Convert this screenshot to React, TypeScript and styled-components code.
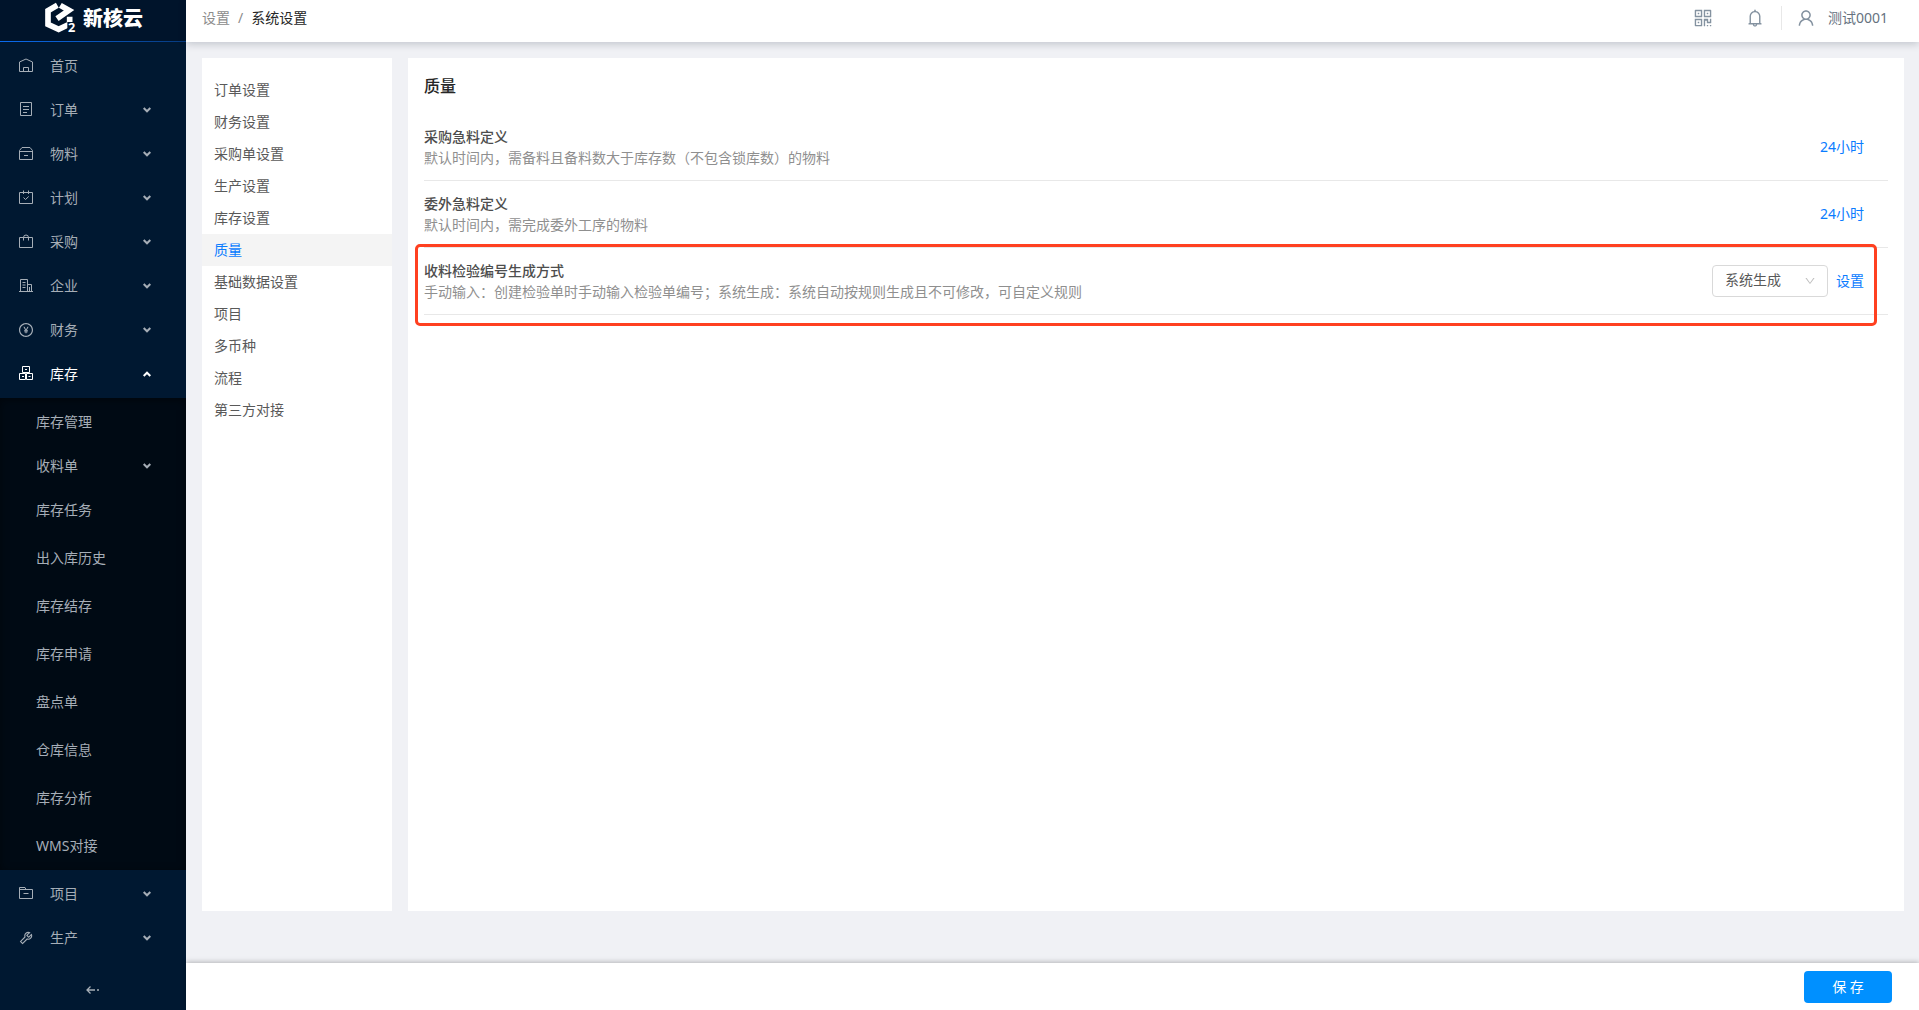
import React from "react";
import styled, { createGlobalStyle } from "styled-components";
import {
  AiOutlineBell,
  AiOutlineDown,
  AiOutlinePayCircle,
  AiOutlineQrcode,
  AiOutlineTool,
  AiOutlineUser,
} from "react-icons/ai";

const GlobalStyle = createGlobalStyle`
  *, *::before, *::after { box-sizing: border-box; }
  body {
    margin: 0;
    font-family: "Noto Sans", "Noto Sans CJK SC", sans-serif;
    font-size: 14px;
    line-height: 20px;
    color: #595959;
  }
  button, select { font: inherit; color: inherit; }
  a { color: inherit; text-decoration: none; }
  h1, h2, p, ul, ol { margin: 0; padding: 0; }
  ul, ol { list-style: none; }
`;

const Page = styled.div`
  display: flex;
  height: 100vh;
  background: #f0f1f5;
`;

/* ---------- sidebar ---------- */

const Sidebar = styled.aside`
  display: flex;
  flex-direction: column;
  flex: none;
  width: 186px;
  background: #001831;
  color: #a6aeb7;
`;

const Brand = styled.a`
  display: flex;
  align-items: center;
  gap: 6px;
  height: 42px;
  padding: 0 0 3px 45px;
  background: #00142b;
  border-bottom: 1px solid;
  border-image: linear-gradient(90deg, #0a6cf0, #063a7e) 1;
  color: #fff;
`;

const BrandName = styled.span`
  font-size: 20px;
  font-weight: 900;
  line-height: 24px;
`;

const Menu = styled.ul`
  display: flex;
  flex-direction: column;
  flex: 1;
  gap: 4px;
  min-height: 0;
  padding-top: 4px;
`;

const MenuButton = styled.button<{ $active?: boolean }>`
  display: flex;
  align-items: center;
  width: 100%;
  height: 40px;
  padding: 0 35px 0 18px;
  border: 0;
  background: none;
  color: ${(p) => (p.$active ? "#fff" : "inherit")};
  text-align: left;
  cursor: pointer;

  > span { flex: 1; margin-left: 16px; }
`;

const SubMenu = styled.ul`
  display: flex;
  flex-direction: column;
  gap: 4px;
  padding: 4px 0;
  background: #000a14;
  box-shadow: inset 0 2px 8px rgba(0, 0, 0, 0.45);
`;

const Leaf = styled.li`
  & + & { margin-top: 4px; }
`;

const LeafLink = styled.a`
  display: flex;
  align-items: center;
  height: 40px;
  padding-left: 36px;
`;

const SubButton = styled(MenuButton)`
  padding-left: 36px;
  > span { margin-left: 0; }
`;

const Collapse = styled.button`
  display: flex;
  align-items: center;
  justify-content: center;
  height: 40px;
  border: 0;
  padding: 0;
  background: none;
  cursor: pointer;
`;

/* ---------- content ---------- */

const Content = styled.div`
  display: flex;
  flex-direction: column;
  flex: 1;
  min-width: 0;
`;

const Header = styled.header`
  display: flex;
  align-items: center;
  justify-content: space-between;
  height: 42px;
  padding: 0 31px 6px 16px;
  background: #fff;
  box-shadow: 0 2px 8px rgba(0, 21, 41, 0.2);
`;

const Crumbs = styled.ol`
  display: flex;
  gap: 8px;
  color: #8c8c8c;
  li[aria-current] { color: #262626; }
`;

const Tools = styled.div`
  display: flex;
  align-items: center;
  color: #8492a0;
`;

const IconButton = styled.button`
  display: flex;
  margin-right: 31px;
  padding: 0;
  border: 0;
  background: none;
  cursor: pointer;
  & + & { margin-right: 16px; }
`;

const UserButton = styled.button`
  display: flex;
  align-items: center;
  gap: 12px;
  height: 24px;
  padding: 0 0 0 14px;
  border: 0;
  border-left: 1px solid #e8e8e8;
  background: none;
  cursor: pointer;
  span { color: #66727f; }
`;

const Body = styled.main`
  display: flex;
  flex: 1;
  gap: 16px;
  min-height: 0;
  padding: 16px 15px 52px 16px;
`;

const SideNav = styled.nav`
  flex: none;
  width: 190px;
  padding: 16px 0;
  background: #fff;
`;

const SideLink = styled.a<{ $active?: boolean }>`
  display: flex;
  align-items: center;
  height: 32px;
  padding: 0 12px;
  background: ${(p) => (p.$active ? "#f4f4f4" : "transparent")};
  color: ${(p) => (p.$active ? "#0a7cff" : "inherit")};
`;

const Panel = styled.section`
  flex: 1;
  min-width: 0;
  padding: 16px;
  background: #fff;
`;

const PanelTitle = styled.h1`
  margin-bottom: 16px;
  color: #262626;
  font-size: 16px;
  font-weight: 500;
  line-height: 24px;
`;

const Row = styled.div`
  position: relative;
  display: flex;
  align-items: center;
  justify-content: space-between;
  padding: 12px 24px 12px 0;
  border-bottom: 1px solid #e8e8e8;
`;

const RowTitle = styled.h2`
  color: #4d4d4d;
  font-size: 14px;
  font-weight: 500;
  line-height: 21px;
`;

const RowText = styled.p`
  color: #8f8f8f;
  line-height: 21px;
`;

const Actions = styled.div`
  display: flex;
  align-items: center;
  gap: 8px;
  margin: -8px 0;
`;

const LinkButton = styled.button`
  padding: 0;
  border: 0;
  background: none;
  color: #0a7cff;
  cursor: pointer;
`;

const Highlight = styled.div`
  position: absolute;
  inset: -4px 11px -12px -9px;
  border: 3px solid #ff4020;
  border-radius: 5px;
  pointer-events: none;
`;

const SelectBox = styled.div`
  display: grid;
  align-items: center;
  width: 116px;

  > * { grid-area: 1 / 1; }
  > svg {
    justify-self: end;
    margin-right: 12px;
    color: #bfbfbf;
    pointer-events: none;
  }
`;

const Select = styled.select`
  width: 100%;
  height: 32px;
  padding: 0 12px 2px;
  border: 1px solid #d9d9d9;
  border-radius: 4px;
  background: #fff;
  appearance: none;
`;

const Footer = styled.footer`
  display: flex;
  justify-content: flex-end;
  padding: 8px 27px 7px;
  background: #fff;
  box-shadow: 0 -1px 5px rgba(0, 0, 0, 0.25);
`;

const SaveButton = styled.button`
  width: 88px;
  height: 32px;
  border: 0;
  border-radius: 4px;
  background: #0090ff;
  color: #fff;
  cursor: pointer;
`;

/* ---------- drawings ---------- */

const Logo = () => (
  <svg width="32" height="36" viewBox="0 -9 96 108" fill="none" aria-hidden="true">
    <g stroke="#fff" strokeWidth="17">
      <path d="M37 4L9 20V61L41 76L74 60V38" />
      <path d="M46 4L72 19L36 44" />
    </g>
    <path d="M67 99V54H96V99Z" fill="#00142b" />
    <text x="69" y="83" fontSize="38" fontWeight="700" fill="#fff">
      2
    </text>
  </svg>
);

const Chevron = ({ up }: { up?: boolean }) => (
  <svg width="8" height="6" viewBox="0 0 8 6" fill="none" stroke="currentColor" strokeWidth="2" aria-hidden="true">
    <path d={up ? "M0.7 5L4 1.7L7.3 5" : "M0.7 1L4 4.3L7.3 1"} />
  </svg>
);

const Glyph = ({ children }: { children: React.ReactNode }) => (
  <svg width="16" height="16" viewBox="-1 -1 16 16" fill="none" stroke="currentColor" aria-hidden="true">
    {children}
  </svg>
);

const icons: Record<string, React.ReactNode> = {
  home: (
    <Glyph>
      <path d="M0.5 12.5V3L7 0L13.5 3V12.5ZM4.5 12.5V8.5H9.5V12.5" />
    </Glyph>
  ),
  order: (
    <Glyph>
      <path d="M1.5 -0.5H12.5V12.5H1.5ZM4 3.5H10M4 6.5H10M4 9.5H8" />
    </Glyph>
  ),
  material: (
    <Glyph>
      <path d="M0.5 3.5L3 0.5H11L13.5 3.5V12.5H0.5ZM0.5 4.5H13.5M5 8.5H9" />
    </Glyph>
  ),
  plan: (
    <Glyph>
      <path d="M0.5 1.5H13.5V12.5H0.5ZM4.5 -0.5V3M9.5 -0.5V3M4.5 6.5L6.5 8.5L9.7 5.5" />
    </Glyph>
  ),
  purchase: (
    <Glyph>
      <path d="M0.5 2.5H13.5V12.5H0.5ZM4.5 5.5V2.5A2.5 2.5 0 0 1 9.5 2.5V5.5" />
    </Glyph>
  ),
  company: (
    <Glyph>
      <path d="M0 12.5H14M1.5 12.5V0.5H8.5V12.5M8.5 5.5H12.5V12.5M3.5 3.5H6.5M3.5 6H6.5M3.5 8.5H6.5M10.5 8V12" />
    </Glyph>
  ),
  finance: <AiOutlinePayCircle size={16} />,
  stock: (
    <Glyph>
      <path d="M3.5 -0.5H10.5V5.5H3.5ZM0.5 6.5H6.5V12.5H0.5ZM7.5 6.5H13.5V12.5H7.5ZM6 2.5H8M3 9.5H5M9.5 9.5H11.5" />
    </Glyph>
  ),
  project: (
    <Glyph>
      <path d="M0.5 0.5H6L7 2.5H13.5V11.5H0.5ZM0.5 2.5H7M4.5 6.5H9.5" />
    </Glyph>
  ),
  production: <AiOutlineTool size={16} />,
};

/* ---------- data ---------- */

const menuTop = [
  { icon: "home", label: "首页", leaf: true },
  { icon: "order", label: "订单" },
  { icon: "material", label: "物料" },
  { icon: "plan", label: "计划" },
  { icon: "purchase", label: "采购" },
  { icon: "company", label: "企业" },
  { icon: "finance", label: "财务" },
  { icon: "stock", label: "库存", open: true },
];

const menuBottom = [
  { icon: "project", label: "项目" },
  { icon: "production", label: "生产" },
];

const stockLeaves = ["库存任务", "出入库历史", "库存结存", "库存申请", "盘点单", "仓库信息", "库存分析", "WMS对接"];

const settings = [
  "订单设置",
  "财务设置",
  "采购单设置",
  "生产设置",
  "库存设置",
  "质量",
  "基础数据设置",
  "项目",
  "多币种",
  "流程",
  "第三方对接",
];

type Entry = { icon: string; label: string; leaf?: boolean; open?: boolean };

const MenuEntry = ({ icon, label, leaf, open }: Entry) => (
  <li>
    <MenuButton type="button" $active={open} aria-expanded={leaf ? undefined : !!open}>
      {icons[icon]}
      <span>{label}</span>
      {!leaf && <Chevron up={open} />}
    </MenuButton>
  </li>
);

const LeafEntry = ({ label }: { label: string }) => (
  <Leaf>
    <LeafLink href="#">{label}</LeafLink>
  </Leaf>
);

type SettingProps = { title: string; text: string; highlighted?: boolean; children: React.ReactNode };

const Setting = ({ title, text, highlighted, children }: SettingProps) => (
  <Row>
    <div>
      <RowTitle>{title}</RowTitle>
      <RowText>{text}</RowText>
    </div>
    <Actions>{children}</Actions>
    {highlighted && <Highlight />}
  </Row>
);

export default function App() {
  return (
    <Page>
      <GlobalStyle />
      <Sidebar>
        <Brand href="#">
          <Logo />
          <BrandName>新核云</BrandName>
        </Brand>
        <Menu>
          {menuTop.map((m) => (
            <MenuEntry key={m.label} {...m} />
          ))}
          <li>
            <SubMenu>
              <LeafEntry label="库存管理" />
              <li>
                <SubButton type="button" aria-expanded={false}>
                  <span>收料单</span>
                  <Chevron />
                </SubButton>
              </li>
              {stockLeaves.map((label) => (
                <LeafEntry key={label} label={label} />
              ))}
            </SubMenu>
          </li>
          {menuBottom.map((m) => (
            <MenuEntry key={m.label} {...m} />
          ))}
        </Menu>
        <Collapse type="button" aria-label="收起菜单">
          <svg width="14" height="8" viewBox="0 0 14 8" fill="none" stroke="currentColor" strokeWidth="1.3" aria-hidden="true">
            <path d="M4.5 0.5L1 4L4.5 7.5M1 4H9M11 4H13" />
          </svg>
        </Collapse>
      </Sidebar>

      <Content>
        <Header>
          <nav aria-label="面包屑">
            <Crumbs>
              <li>
                <a href="#">设置</a>
              </li>
              <li aria-hidden="true">/</li>
              <li aria-current="page">系统设置</li>
            </Crumbs>
          </nav>
          <Tools>
            <IconButton type="button" aria-label="二维码">
              <AiOutlineQrcode size={22} />
            </IconButton>
            <IconButton type="button" aria-label="通知">
              <AiOutlineBell size={20} />
            </IconButton>
            <UserButton type="button">
              <AiOutlineUser size={20} />
              <span>测试0001</span>
            </UserButton>
          </Tools>
        </Header>

        <Body>
          <SideNav aria-label="设置">
            {settings.map((label) => (
              <SideLink key={label} href="#" $active={label === "质量"}>
                {label}
              </SideLink>
            ))}
          </SideNav>
          <Panel>
            <PanelTitle>质量</PanelTitle>
            <Setting title="采购急料定义" text="默认时间内，需备料且备料数大于库存数（不包含锁库数）的物料">
              <LinkButton type="button">24小时</LinkButton>
            </Setting>
            <Setting title="委外急料定义" text="默认时间内，需完成委外工序的物料">
              <LinkButton type="button">24小时</LinkButton>
            </Setting>
            <Setting
              title="收料检验编号生成方式"
              text="手动输入：创建检验单时手动输入检验单编号；系统生成：系统自动按规则生成且不可修改，可自定义规则"
              highlighted
            >
              <SelectBox>
                <Select aria-label="收料检验编号生成方式" defaultValue="系统生成">
                  <option>系统生成</option>
                  <option>手动输入</option>
                </Select>
                <AiOutlineDown size={12} />
              </SelectBox>
              <LinkButton type="button">设置</LinkButton>
            </Setting>
          </Panel>
        </Body>

        <Footer>
          <SaveButton type="button">保 存</SaveButton>
        </Footer>
      </Content>
    </Page>
  );
}
